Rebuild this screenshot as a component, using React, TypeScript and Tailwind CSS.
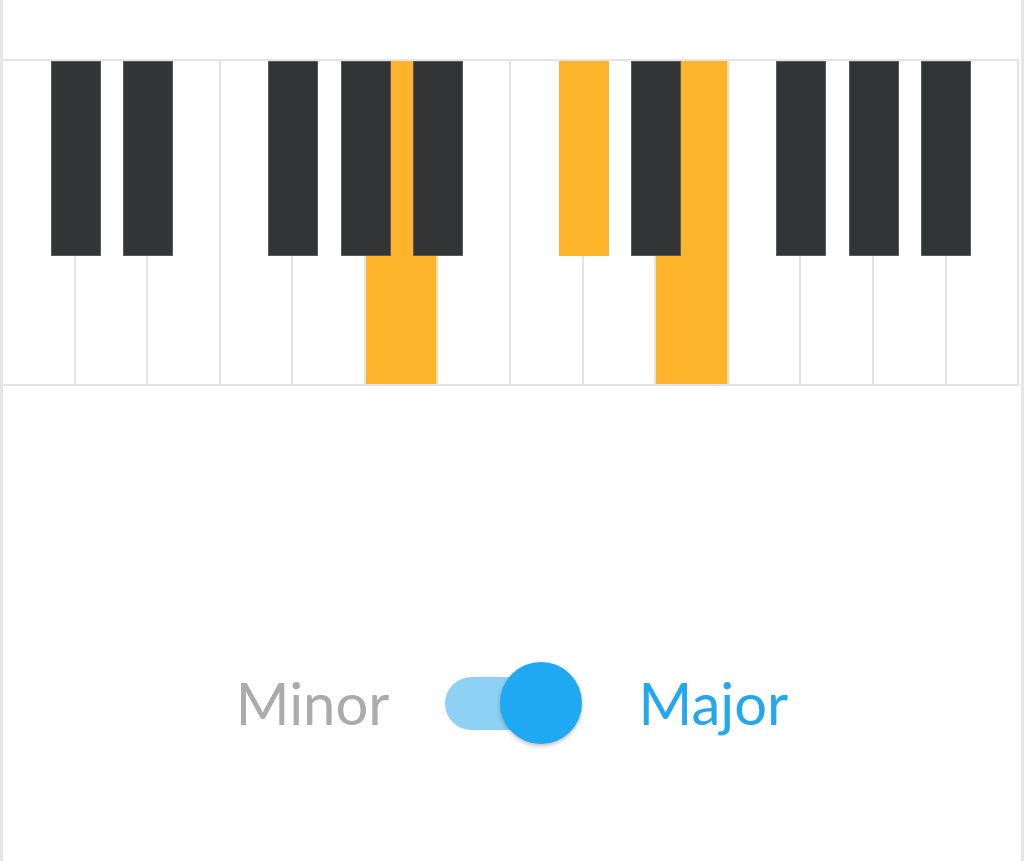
const WHITE_KEYS = ['C', 'D', 'E', 'F', 'G', 'A', 'B', 'C', 'D', 'E', 'F', 'G', 'A', 'B'];
// boundary index (between white keys) where a black key sits
const BLACK_KEYS = [1, 2, 4, 5, 6, 8, 9, 11, 12, 13];

const activeWhite = [5, 9];
const activeBlack = [8];

function Piano() {
  return (
    <div className="relative mt-[59px] h-[327px] w-[1016px] border-y-2 border-[#e4e4e4]">
      <div className="flex h-full">
        {WHITE_KEYS.map((note, i) => (
          <div
            key={i}
            title={note}
            className={`h-full flex-1 border-r-2 ${
              activeWhite.includes(i) ? 'bg-[#fdb42b] border-[#f3dca8]' : 'bg-white border-[#e4e4e4]'
            }`}
          />
        ))}
      </div>
      {BLACK_KEYS.map((b) => (
        <div
          key={b}
          className={`absolute top-0 h-[195px] w-[50px] border ${
            activeBlack.includes(b) ? 'bg-[#fdb42b] border-[#fdb42b]' : 'bg-[#333436] border-[#5a5b5d]'
          }`}
          style={{ left: `calc(${(b * 100) / 14}% - 25px)` }}
        />
      ))}
    </div>
  );
}

function ModeToggle() {
  return (
    <div className="mt-[276px] flex items-center justify-center gap-[56px]" style={{ fontFamily: 'Lato, "Open Sans", sans-serif' }}>
      <span className="text-[58px] leading-none text-[#ababab]">Minor</span>
      <div className="relative h-[82px] w-[137px]">
        <div className="absolute left-0 top-[15px] h-[53px] w-[116px] rounded-full bg-[#8fd0f5]" />
        <div className="absolute right-0 top-0 h-[82px] w-[82px] rounded-full bg-[#1ea9f2] shadow-[0_2px_4px_rgba(0,0,0,0.25)]" />
      </div>
      <span className="text-[58px] leading-none text-[#25a7ee]">Major</span>
    </div>
  );
}

export default function App() {
  return (
    <div className="h-[861px] w-full overflow-hidden border-x-[3px] border-[#e6e6e6] bg-white">
      <Piano />
      <ModeToggle />
    </div>
  );
}
